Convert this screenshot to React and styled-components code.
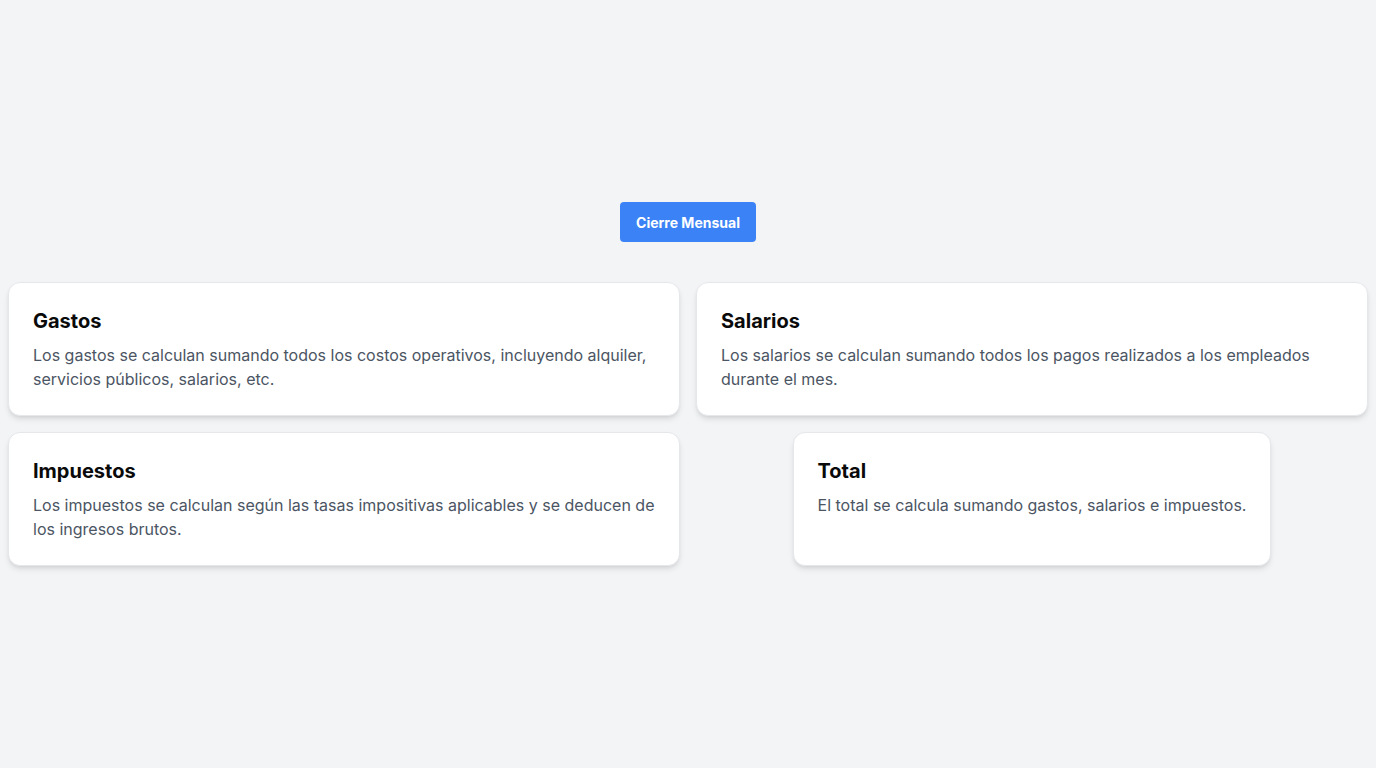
import React from "react";
import styled, { createGlobalStyle } from "styled-components";

const Global = createGlobalStyle`
  * { box-sizing: border-box; }
  html, body { margin: 0; padding: 0; }
  body {
    background: #f3f4f6;
    font-family: Inter, "Noto Sans", sans-serif;
  }
`;

const Page = styled.main`
  min-height: 100vh;
  display: flex;
  flex-direction: column;
  align-items: center;
  justify-content: center;
  padding: 0 8px;
`;

const Button = styled.button`
  height: 40px;
  padding: 0 16px;
  border: none;
  border-radius: 4px;
  background: #3b82f6;
  color: #ffffff;
  font-family: Inter, sans-serif;
  font-size: 14px;
  font-weight: 700;
  cursor: pointer;
  margin-bottom: 40px;
`;

const Grid = styled.section`
  width: 100%;
  display: grid;
  grid-template-columns: 1fr 1fr;
  gap: 16px;
`;

const Card = styled.article`
  background: #ffffff;
  border: 1px solid #e5e7eb;
  border-radius: 12px;
  padding: 24px;
  box-shadow: 0 4px 6px -1px rgba(0, 0, 0, 0.1), 0 2px 4px -2px rgba(0, 0, 0, 0.1);
  justify-self: ${(p) => (p.$centered ? "center" : "stretch")};
  width: ${(p) => (p.$centered ? "fit-content" : "auto")};
`;

const Title = styled.h2`
  margin: 0 0 8px;
  font-size: 20px;
  line-height: 28px;
  font-weight: 700;
  color: #0a0a0a;
`;

const Text = styled.p`
  margin: 0;
  font-size: 16px;
  line-height: 24px;
  color: #4b5563;
`;

const cards = [
  {
    title: "Gastos",
    text: "Los gastos se calculan sumando todos los costos operativos, incluyendo alquiler, servicios públicos, salarios, etc.",
  },
  {
    title: "Salarios",
    text: "Los salarios se calculan sumando todos los pagos realizados a los empleados durante el mes.",
  },
  {
    title: "Impuestos",
    text: "Los impuestos se calculan según las tasas impositivas aplicables y se deducen de los ingresos brutos.",
  },
  {
    title: "Total",
    text: "El total se calcula sumando gastos, salarios e impuestos.",
    centered: true,
  },
];

export default function App() {
  return (
    <>
      <Global />
      <Page>
        <Button>Cierre Mensual</Button>
        <Grid>
          {cards.map((c) => (
            <Card key={c.title} $centered={c.centered}>
              <Title>{c.title}</Title>
              <Text>{c.text}</Text>
            </Card>
          ))}
        </Grid>
      </Page>
    </>
  );
}
